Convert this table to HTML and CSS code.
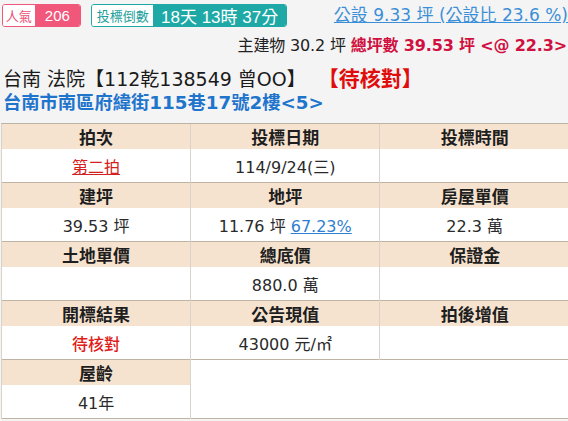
FILE: index.html
```html
<!DOCTYPE html>
<html lang="zh-Hant">
<head>
<meta charset="utf-8">
<link rel="stylesheet" href="styles.css">
</head>
<body>
<div class="page">
  <div class="toprow">
    <span class="badge badge-pink"><span class="b-label">人氣</span><span class="b-value">206</span></span>
    <span class="badge badge-teal"><span class="b-label">投標倒數</span><span class="b-value">18天 13時 37分</span></span>
    <a class="share-link">公設 9.33 坪 (公設比 23.6 %)</a>
  </div>
  <div class="area-line">主建物 30.2 坪 <span class="total">總坪數 39.53 坪 &lt;@ 22.3&gt;</span></div>
  <div class="case-line">台南 法院【112乾138549 曾OO】 <span class="status">【待核對】</span></div>
  <div class="addr-line">台南市南區府緯街115巷17號2樓&lt;5&gt;</div>
  <table class="info">
    <tr class="hd"><th>拍次</th><th>投標日期</th><th>投標時間</th></tr>
    <tr class="vl"><td><a class="red-link">第二拍</a></td><td>114/9/24(三)</td><td></td></tr>
    <tr class="hd"><th>建坪</th><th>地坪</th><th>房屋單價</th></tr>
    <tr class="vl"><td>39.53 坪</td><td>11.76 坪 <a class="blue-link">67.23%</a></td><td>22.3 萬</td></tr>
    <tr class="hd"><th>土地單價</th><th>總底價</th><th>保證金</th></tr>
    <tr class="vl"><td></td><td>880.0 萬</td><td></td></tr>
    <tr class="hd"><th>開標結果</th><th>公告現值</th><th>拍後增值</th></tr>
    <tr class="vl"><td><span class="red">待核對</span></td><td>43000 元/㎡</td><td></td></tr>
    <tr class="hd"><th>屋齡</th><td class="empty" colspan="2" rowspan="2"></td></tr>
    <tr class="vl"><td>41年</td></tr>
  </table>
</div>
</body>
</html>
```

FILE: styles.css
```css
html, body {
  margin: 0;
  padding: 0;
  background: #f4f4f4;
  overflow: hidden;
}
body {
  font-family: "DejaVu Sans", "Noto Sans CJK TC", sans-serif;
  color: #222;
}
.page {
  width: 568px;
}
.toprow {
  display: flex;
  align-items: center;
  padding-top: 4px;
  padding-left: 2px;
  height: 23px;
  white-space: nowrap;
}
.badge {
  display: flex;
  height: 23px;
  box-sizing: border-box;
  border-radius: 3px;
  overflow: hidden;
  align-items: stretch;
}
.badge .b-label {
  background: #fff;
  display: flex;
  align-items: center;
  justify-content: center;
  font-size: 13px;
}
.badge .b-value {
  display: flex;
  align-items: center;
  justify-content: center;
  color: #fff;
  font-family: "Liberation Sans", "Noto Sans CJK TC", sans-serif;
}
.badge-pink {
  border: 1px solid #f1577b;
}
.badge-pink .b-label {
  color: #ec4f74;
  width: 32px;
}
.badge-pink .b-value {
  background: #f1577b;
  width: 46px;
  font-size: 15px;
}
.badge-teal {
  border: 1px solid #1fa9a6;
  margin-left: 10px;
}
.badge-teal .b-label {
  color: #1c9f9c;
  width: 62px;
}
.badge-teal .b-value {
  background: #1fa9a6;
  width: 134px;
  font-size: 17px;
}
.share-link {
  margin-left: 47px;
  color: #3b8fd8;
  text-decoration: underline;
  font-size: 17px;
  line-height: 23px;
}
.area-line {
  margin-top: 8px;
  text-align: right;
  font-size: 16px;
  line-height: 22px;
  padding-right: 1px;
  white-space: nowrap;
  letter-spacing: -0.15px;
}
.area-line .total {
  color: #cf1040;
  font-weight: bold;
}
.case-line {
  margin-top: 10px;
  padding-left: 3px;
  font-size: 19px;
  line-height: 24px;
  color: #1a1a1a;
  white-space: nowrap;
}
.case-line .status {
  color: #e00d0d;
  font-weight: bold;
  font-size: 21px;
  margin-left: 6px;
}
.addr-line {
  padding-left: 3px;
  font-size: 18.3px;
  line-height: 24px;
  color: #1f74cc;
  font-weight: bold;
  white-space: nowrap;
}
.info {
  margin-top: 8px;
  margin-left: 1px;
  width: 568px;
  border-collapse: collapse;
  table-layout: fixed;
  border-left: 1px solid #c9c2b8;
  border-bottom: 1px solid #bfb3a3;
}
.info th, .info td {
  padding: 0;
  text-align: center;
  border-left: 1px solid #d9d3cb;
  font-size: 16px;
}
.info tr.hd th {
  background: #f6e3cf;
  height: 25px;
  font-size: 17px;
  font-weight: bold;
  color: #1e1e1e;
  border-top: 1px solid #bfb3a3;
}
.info tr.hd td.empty {
  border-top: 1px solid #bfb3a3;
}
.info tr.vl td, .info td.empty {
  background: #fff;
  height: 33px;
  color: #2a2a2a;
}
.red-link {
  color: #d42020;
  text-decoration: underline;
}
.blue-link {
  color: #2f7fd0;
  text-decoration: underline;
}
.red {
  color: #e01b1b;
  font-weight: 500;
}
```
